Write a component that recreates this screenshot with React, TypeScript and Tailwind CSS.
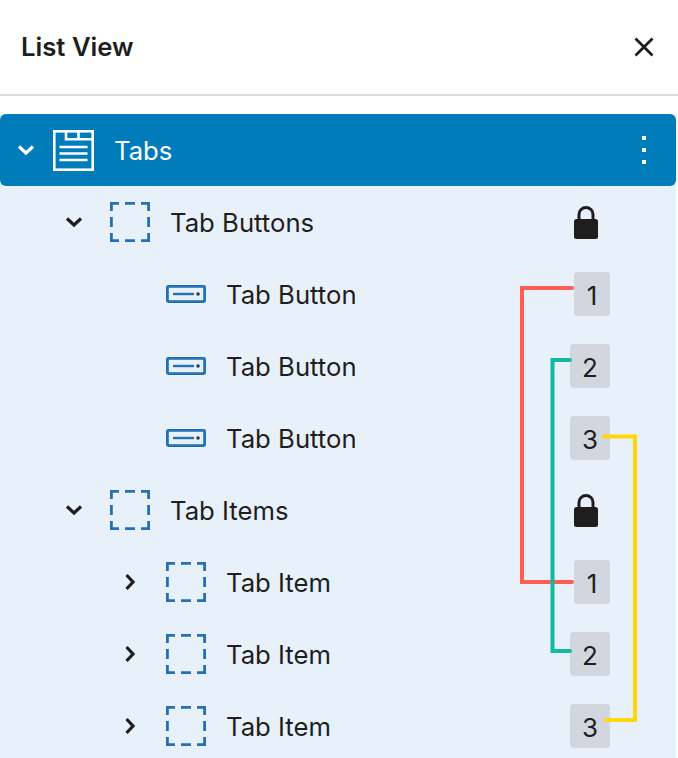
import React from "react";

type RowProps = {
  label: string;
  pad: string;
  chevron?: "down" | "right";
  icon: React.ReactNode;
  badge?: { n: number; w: string };
  lock?: boolean;
};

const ChevronDown = ({ color = "#1e1e1e" }: { color?: string }) => (
  <svg width="18" height="12" viewBox="0 0 18 12" fill="none">
    <path d="M2 2.5l7 6.5 7-6.5" stroke={color} strokeWidth="3.2" />
  </svg>
);

const ChevronRight = () => (
  <svg width="12" height="18" viewBox="0 0 12 18" fill="none">
    <path d="M2.5 2l6.5 7-6.5 7" stroke="#1e1e1e" strokeWidth="3.2" />
  </svg>
);

const DashedIcon = () => (
  <svg width="40" height="40" viewBox="0 0 40 40" fill="none" stroke="#2271b8" strokeWidth="2.8">
    <path d="M1.400 9V1.400H9M15 1.400h10M31 1.400h7.600V9M38.600 15v10M38.600 31v7.600H31M25 38.600H15M9 38.600H1.400V31M1.400 25V15" />
  </svg>
);

const ButtonIcon = () => (
  <svg width="40" height="18" viewBox="0 0 40 18" fill="none">
    <rect x="1.400" y="1.400" width="37.200" height="15.200" rx="1" stroke="#2271b8" strokeWidth="2.8" />
    <path d="M7 9h21" stroke="#2271b8" strokeWidth="2.400" />
    <circle cx="32" cy="9" r="1.800" fill="#1e3a5f" />
  </svg>
);

const TabsIcon = () => (
  <svg width="41" height="41" viewBox="0 0 41 41" fill="none" stroke="#fff" strokeWidth="2.600">
    <rect x="1.300" y="1.300" width="38.400" height="38.400" />
    <path d="M13 1.300v8h26.700M25.500 1v8M6.500 17h28M6.500 23.500h28M6.500 30h28" />
  </svg>
);

const Lock = () => (
  <svg width="24" height="34" viewBox="0 0 24 34" fill="#1e1e1e">
    <path d="M5 15V9.500a7 7 0 0 1 14 0V15" fill="none" stroke="#1e1e1e" strokeWidth="3" />
    <rect x="0" y="14" width="24" height="20" rx="2.500" />
  </svg>
);

const Row = ({ label, pad, chevron, icon, badge, lock }: RowProps) => (
  <div className={`flex h-[72px] items-center ${pad} text-[25.7px] text-[#1e1e1e]`}>
    <div className="mr-[16px] flex w-[40px] shrink-0 items-center justify-center">
      {chevron === "down" && <ChevronDown />}
      {chevron === "right" && <ChevronRight />}
    </div>
    <div className="mr-[20px] flex w-[40px] shrink-0 justify-center">{icon}</div>
    <span className="flex-1 pt-[3px]">{label}</span>
    <div className="mr-[66px] flex w-[40px] justify-end">
      {lock && (
        <div className="mr-[12px]">
          <Lock />
        </div>
      )}
      {badge && (
        <div className={`flex h-[44px] ${badge.w} items-center justify-center rounded-[4px] bg-[#d2d7df] pt-[3px] text-[26px]`}>
          {badge.n}
        </div>
      )}
    </div>
  </div>
);

export default function App() {
  return (
    <div className="relative h-[758px] w-[678px] overflow-hidden bg-white font-['Inter',sans-serif]">
      <div className="flex h-[96px] items-center justify-between border-b-2 border-[#dddddd] px-[21px]">
        <h1 className="text-[25.700px] font-semibold text-[#1e1e1e]">List View</h1>
        <svg width="22" height="22" viewBox="0 0 22 22" fill="none" stroke="#1e1e1e" strokeWidth="2.800" className="mr-[2px]">
          <path d="M2.500 2.500l17 17M19.500 2.500l-17 17" />
        </svg>
      </div>

      <div className="mt-[18px] mr-[2px] bg-[#e8f1f9]">
        <div className="flex h-[72px] items-center rounded-[6px] bg-[#007cba] pl-[6px] text-[25.700px] text-white">
          <div className="flex w-[40px] justify-center">
            <ChevronDown color="#fff" />
          </div>
          <div className="ml-[7px] mr-[20px] flex">
            <TabsIcon />
          </div>
          <span className="flex-1 pt-[3px]">Tabs</span>
          <div className="mr-[30px] flex flex-col gap-[8px]">
            <span className="h-[4px] w-[4px] bg-white" />
            <span className="h-[4px] w-[4px] bg-white" />
            <span className="h-[4px] w-[4px] bg-white" />
          </div>
        </div>
        <Row label="Tab Buttons" pad="pl-[54px]" chevron="down" icon={<DashedIcon />} lock />
        <Row label="Tab Button" pad="pl-[110px]" icon={<ButtonIcon />} badge={{ n: 1, w: "w-[36px]" }} />
        <Row label="Tab Button" pad="pl-[110px]" icon={<ButtonIcon />} badge={{ n: 2, w: "w-[40px]" }} />
        <Row label="Tab Button" pad="pl-[110px]" icon={<ButtonIcon />} badge={{ n: 3, w: "w-[40px]" }} />
        <Row label="Tab Items" pad="pl-[54px]" chevron="down" icon={<DashedIcon />} lock />
        <Row label="Tab Item" pad="pl-[110px]" chevron="right" icon={<DashedIcon />} badge={{ n: 1, w: "w-[36px]" }} />
        <Row label="Tab Item" pad="pl-[110px]" chevron="right" icon={<DashedIcon />} badge={{ n: 2, w: "w-[40px]" }} />
        <Row label="Tab Item" pad="pl-[110px]" chevron="right" icon={<DashedIcon />} badge={{ n: 3, w: "w-[40px]" }} />
      </div>

      {/* connector lines sit over the rows */}
      <svg className="absolute left-0 top-0" width="678" height="758" fill="none" strokeWidth="4">
        <path d="M572 288H522V582H572" stroke="#ff5f52" strokeLinecap="round" />
        <path d="M570 360H552.500V651H570" stroke="#10b9a0" strokeLinecap="round" />
        <path d="M604 436.500H635V720H606" stroke="#ffd60a" strokeLinecap="round" />
      </svg>
    </div>
  );
}
